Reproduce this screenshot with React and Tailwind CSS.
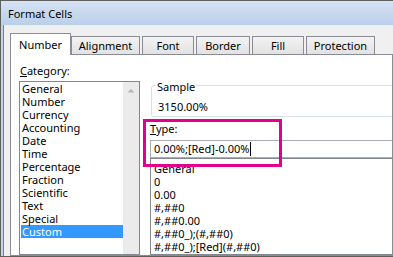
const categories = [
  'General',
  'Number',
  'Currency',
  'Accounting',
  'Date',
  'Time',
  'Percentage',
  'Fraction',
  'Scientific',
  'Text',
  'Special',
  'Custom',
];

const formats = [
  'General',
  '0',
  '0.00',
  '#,##0',
  '#,##0.00',
  '#,##0_);(#,##0)',
  '#,##0_);[Red](#,##0)',
  '#,##0.00_);(#,##0.00)',
];

const tabs = [
  { label: 'Alignment', width: 'w-[69px]' },
  { label: 'Font', width: 'w-[52px]' },
  { label: 'Border', width: 'w-[54px]' },
  { label: 'Fill', width: 'w-[52px]' },
  { label: 'Protection', width: 'w-[69px]' },
];

export default function App() {
  return (
    <div className="relative flex h-[257px] w-[393px] flex-col overflow-hidden border-l border-t border-[#5f5f5f] bg-[#f0f0f0] font-['Noto_Sans',sans-serif] text-[11px] leading-[13px] text-black">
      {/* Title bar */}
      <div className="h-[24px] shrink-0 bg-gradient-to-b from-[#d5e3f4] to-[#bbcfe9] pl-[7px] pt-[6px]">
        Format Cells
      </div>

      <div className="flex min-h-0 flex-1 border-b border-[#5f5f5f]">
        {/* Window frame */}
        <div className="w-[2px] shrink-0 bg-[#c3d5ed]" />
        <div className="w-px shrink-0 bg-[#7d7d7d]" />

        <div className="flex min-w-0 flex-1 flex-col pl-[6px] pt-[8px]">
          {/* Tabs */}
          <div className="flex h-[21px] shrink-0 items-end">
            <div className="relative z-10 -mb-px h-[22px] w-[61px] border-x border-t border-[#898c95] bg-white pt-[4px] text-center">
              Number
            </div>
            {tabs.map((tab, i) => (
              <div
                key={tab.label}
                className={`h-[18px] ${tab.width} ${i > 0 ? 'ml-[2px]' : ''} border-x border-t border-[#898c95] bg-gradient-to-b from-[#f3f3f3] to-[#e2e2e2] pt-[2px] text-center`}
              >
                {tab.label}
              </div>
            ))}
          </div>

          {/* Panel */}
          <div className="flex min-h-0 flex-1 overflow-hidden border border-[#898c95] bg-white">
            {/* Category */}
            <div className="flex shrink-0 flex-col pl-[8px] pt-[9px]">
              <div className="pl-px">
                <span className="underline">C</span>ategory:
              </div>
              <div className="mt-[4px] flex min-h-0 w-[121px] flex-1 border border-[#828790]">
                <div className="w-[103px]">
                  {categories.map((c) => (
                    <div
                      key={c}
                      className={`ml-px h-[13px] w-[102px] pl-px ${c === 'Custom' ? 'bg-[#3399ff] text-white' : ''}`}
                    >
                      {c}
                    </div>
                  ))}
                </div>
                <div className="w-[16px] bg-[#ebebeb]">
                  <svg width="16" height="17" viewBox="0 0 16 17">
                    <path d="M4.5 10.5 L8 7 L11.5 10.5 Z" fill="#b4b4b4" />
                  </svg>
                </div>
              </div>
            </div>

            {/* Sample / Type */}
            <div className="ml-[10px] flex w-[260px] shrink-0 flex-col pt-[30px]">
              <div className="relative ml-px h-[32px] rounded-[3px] border border-[#d5dfe5] pl-[6px] pt-[14px]">
                <span className="absolute left-[4px] top-[-6px] bg-white px-px">Sample</span>
                3150.00%
              </div>
              <div className="mt-[5px]">
                <span className="underline">T</span>ype:
              </div>
              <div className="mt-[5px] flex h-[18px] shrink-0 items-start border border-[#abadb3] pl-[3px] pt-px">
                0.00%;[Red]-0.00%
                <span className="ml-px inline-block h-[14px] w-px bg-black" />
              </div>
              <div className="min-h-0 flex-1 overflow-hidden border border-[#828790] pl-[3px] pt-[3px]">
                {formats.map((f) => (
                  <div key={f} className="h-[13px] whitespace-nowrap">
                    {f}
                  </div>
                ))}
              </div>
            </div>
          </div>
        </div>
      </div>

      {/* Callout around the Type field */}
      <div className="absolute left-[142px] top-[118px] h-[48px] w-[139px] border-[3px] border-[#e3008c]" />
    </div>
  );
}
